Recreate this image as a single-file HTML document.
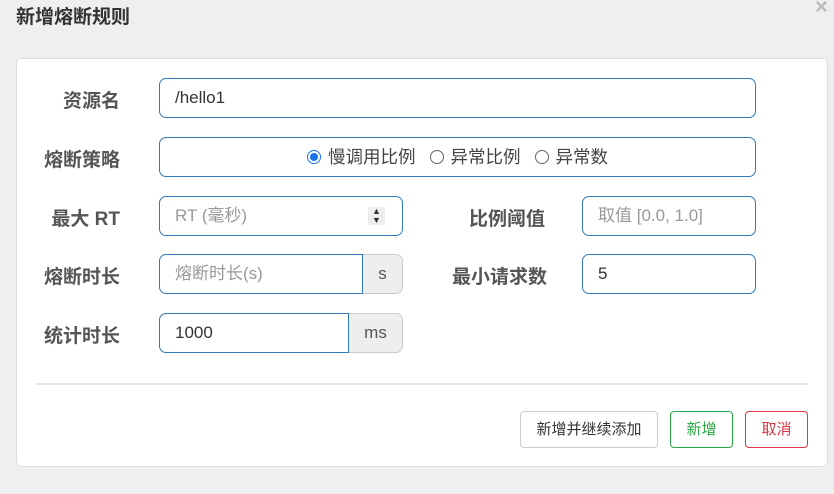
<!DOCTYPE html>
<html><head><meta charset="utf-8"><style>
*{box-sizing:border-box;margin:0;padding:0}
body{width:834px;height:494px;background:#efefef;font-family:"Liberation Sans","Noto Sans CJK SC",sans-serif;position:relative;overflow:hidden;color:#333}
.title{position:absolute;left:16px;top:6px;font-size:19px;font-weight:bold;color:#333;line-height:24px}
.close{position:absolute;left:815px;top:-6px;font-size:22px;color:#bbb;font-weight:bold}
.card{position:absolute;left:16px;top:58px;width:812px;height:409px;background:#fff;border:1px solid #ddd;border-radius:5px}
.lbl{position:absolute;font-size:19px;font-weight:bold;color:#555;text-align:right;line-height:40px;height:40px;margin-top:4px}
.inp{position:absolute;height:40px;border:1px solid #3379b7;border-radius:7px;font-size:17px;line-height:38px;padding-left:15px;color:#333;background:#fff}
.ph{color:#999}
.addon{position:absolute;height:40px;background:#eee;border:1px solid #ccc;border-left:none;border-radius:0 7px 7px 0;font-size:17px;line-height:38px;text-align:center;color:#555}
.radio{display:inline-block;width:14px;height:14px;border:1px solid #666;border-radius:50%;vertical-align:-1px;margin-right:7px;position:relative}
.radio.on{border:1px solid #1a73e8}
.radio.on::after{content:"";position:absolute;left:2px;top:2px;width:8px;height:8px;border-radius:50%;background:#1a73e8}
.opt{margin-right:14px}
.btn{position:absolute;top:411px;height:37px;border:1px solid #ccc;border-radius:4px;background:#fff;font-size:15px;line-height:35px;text-align:center}
</style></head><body>
<div class="title">新增熔断规则</div>
<div class="close">×</div>
<div class="card"></div>

<div class="lbl" style="left:20px;width:100px;top:78px">资源名</div>
<div class="inp" style="left:159px;top:78px;width:597px">/hello1</div>

<div class="lbl" style="left:20px;width:100px;top:137px">熔断策略</div>
<div class="inp" style="left:159px;top:137px;width:597px;padding-left:147px;font-size:17.5px;color:#444;white-space:nowrap"><span class="radio on"></span><span class="opt">慢调用比例</span><span class="radio"></span><span class="opt">异常比例</span><span class="radio"></span>异常数</div>

<div class="lbl" style="left:20px;width:100px;top:196px">最大 RT</div>
<div class="inp ph" style="left:159px;top:196px;width:244px">RT (毫秒)<span style="position:absolute;right:17px;top:10px;width:17px;height:18px;background:#eee;font-size:9px;line-height:9px;color:#333;text-align:center">▲<br>▼</span></div>
<div class="lbl" style="left:420px;width:125px;top:196px">比例阈值</div>
<div class="inp ph" style="left:582px;top:196px;width:174px">取值 [0.0, 1.0]</div>

<div class="lbl" style="left:20px;width:100px;top:254px">熔断时长</div>
<div class="inp ph" style="left:159px;top:254px;width:204px;border-radius:7px 0 0 7px">熔断时长(s)</div>
<div class="addon" style="left:363px;top:254px;width:40px">s</div>
<div class="lbl" style="left:420px;width:127px;top:254px">最小请求数</div>
<div class="inp" style="left:582px;top:254px;width:174px">5</div>

<div class="lbl" style="left:20px;width:100px;top:313px">统计时长</div>
<div class="inp" style="left:159px;top:313px;width:190px;border-radius:7px 0 0 7px">1000</div>
<div class="addon" style="left:349px;top:313px;width:54px">ms</div>

<div style="position:absolute;left:36px;top:383px;width:772px;height:2px;background:#e5e5e5"></div>

<div class="btn" style="left:520px;width:138px;color:#333">新增并继续添加</div>
<div class="btn" style="left:670px;width:63px;border-color:#28a745;color:#28a745">新增</div>
<div class="btn" style="left:745px;width:63px;border-color:#dc3545;color:#dc3545">取消</div>
</body></html>
